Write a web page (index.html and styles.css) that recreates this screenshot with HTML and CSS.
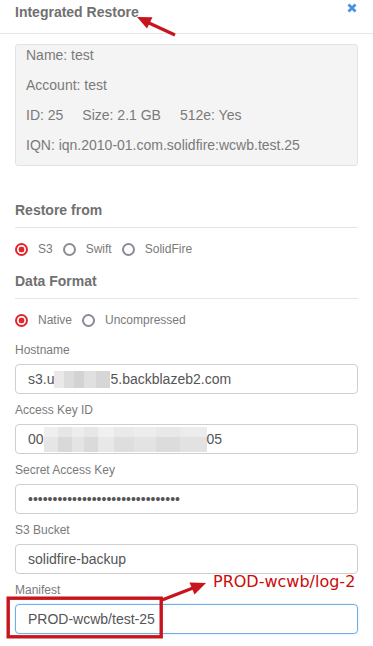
FILE: index.html
```html
<!DOCTYPE html>
<html>
<head>
<meta charset="utf-8">
<link rel="stylesheet" href="styles.css">
</head>
<body>
<div class="page">
  <div class="header">
    <div class="title">Integrated Restore</div>
    <svg class="close" width="10" height="10" viewBox="0 0 10 10"><path d="M1.5 1.5 L8.5 8.5 M8.5 1.5 L1.5 8.5" stroke="#4a8fe3" stroke-width="2.8" stroke-linecap="butt"/></svg>
  </div>
  <div class="content">
    <div class="well">
      <p>Name: test</p>
      <p>Account: test</p>
      <p><span class="stat">ID: 25</span><span class="stat">Size: 2.1 GB</span><span>512e: Yes</span></p>
      <p>IQN: iqn.2010-01.com.solidfire:wcwb.test.25</p>
    </div>

    <div class="section-title">Restore from</div>
    <div class="rule"></div>
    <div class="radios">
      <span class="radio checked"></span><span class="opt">S3</span>
      <span class="radio"></span><span class="opt">Swift</span>
      <span class="radio"></span><span class="opt">SolidFire</span>
    </div>

    <div class="section-title tight">Data Format</div>
    <div class="rule"></div>
    <div class="radios">
      <span class="radio checked"></span><span class="opt">Native</span>
      <span class="radio"></span><span class="opt">Uncompressed</span>
    </div>

    <div class="fields">
      <div class="group">
        <div class="label">Hostname</div>
        <div class="input">s3.u<span class="blur blur-host"></span>5.backblazeb2.com</div>
      </div>
      <div class="group">
        <div class="label">Access Key ID</div>
        <div class="input">00<span class="blur blur-key"></span>05</div>
      </div>
      <div class="group">
        <div class="label">Secret Access Key</div>
        <div class="input dots">•••••••••••••••••••••••••••••••</div>
      </div>
      <div class="group">
        <div class="label">S3 Bucket</div>
        <div class="input">solidfire-backup</div>
      </div>
      <div class="group">
        <div class="label">Manifest</div>
        <div class="input focus">PROD-wcwb/test-25</div>
      </div>
    </div>
  </div>

  <svg class="annot" width="373" height="646" viewBox="0 0 373 646">
    <line x1="175" y1="35" x2="149" y2="23" stroke="#c8141c" stroke-width="3.2"/>
    <polygon points="137,17 152.5,17.3 147,28.6" fill="#c8141c"/>
    <rect x="8.2" y="598.2" width="153" height="38.6" fill="none" stroke="#c8141c" stroke-width="3.4"/>
    <line x1="162" y1="600" x2="193" y2="588" stroke="#c8141c" stroke-width="3.2"/>
    <polygon points="206,583 194.5,594.5 189.5,582.5" fill="#c8141c"/>
  </svg>
  <div class="note">PROD-wcwb/log-2</div>
</div>
</body>
</html>
```

FILE: styles.css
```css
html, body {
  margin: 0;
  padding: 0;
  background: #fff;
}

.page {
  position: relative;
  width: 373px;
  height: 646px;
  overflow: hidden;
  font-family: "Liberation Sans", Arial, sans-serif;
  color: #777;
}

.header {
  display: flex;
  justify-content: space-between;
  align-items: flex-start;
  height: 34px;
  box-sizing: border-box;
  padding: 2px 16px 0 15px;
  border-bottom: 1px solid #e5e5e5;
}

.title {
  font-size: 14px;
  font-weight: bold;
  line-height: 20px;
  color: #707070;
}

.close {
  display: block;
  margin-top: 1px;
}

.content {
  padding: 0 15px;
}

.well {
  margin-top: 10px;
  background: #f4f4f4;
  border: 1px solid #e3e3e3;
  border-radius: 3px;
  padding: 0 10px 10px;
}

.well p {
  margin: 0 0 10px;
  font-size: 14px;
  line-height: 20px;
  color: #7a7a7a;
}

.well p:last-child {
  margin-bottom: 0;
}

.stat {
  margin-right: 19px;
}

.section-title {
  margin-top: 34px;
  font-size: 14px;
  font-weight: bold;
  line-height: 20px;
  color: #707070;
}

.section-title.tight {
  margin-top: 12px;
}

.rule {
  margin-top: 7px;
  border-top: 1px solid #e5e5e5;
}

.radios {
  display: flex;
  align-items: center;
  height: 20px;
  margin-top: 11px;
  font-size: 12px;
  color: #7a7a7a;
}

.radio {
  display: inline-block;
  flex: none;
  width: 13px;
  height: 13px;
  box-sizing: border-box;
  border: 2px solid #8b8b95;
  border-radius: 50%;
  margin: 0 10px 0 0;
}

.radio.checked {
  border-color: #e2262c;
  background: radial-gradient(circle, #e2262c 0 2.7px, transparent 3.2px);
}

.opt {
  margin-right: 10px;
}

.fields {
  margin-top: 12px;
}

.group {
  margin-bottom: 8px;
}

.label {
  font-size: 12px;
  line-height: 16px;
  margin-bottom: 6px;
  color: #7a7a7a;
}

.input {
  display: flex;
  align-items: center;
  height: 30px;
  box-sizing: border-box;
  border: 1px solid #cfcfcf;
  border-radius: 4px;
  padding: 0 12px;
  font-size: 14px;
  color: #555;
  white-space: nowrap;
}

.input.focus {
  border-color: #6fb0e8;
  box-shadow: 0 0 2px rgba(102, 175, 233, 0.4);
}

.dots {
  font-size: 14px;
  letter-spacing: 0;
  color: #555;
}

.blur {
  display: inline-block;
  flex: none;
}

.blur-host {
  width: 56px;
  height: 17px;
  background: linear-gradient(90deg, #e9e9e9 0 10px, #dcdcdc 10px 20px, #d3d3d3 20px 30px, #e0e0e0 30px 42px, #d6d6d6 42px 56px);
}

.blur-key {
  width: 163px;
  height: 25px;
  background:
    linear-gradient(180deg, rgba(255,255,255,0.35) 0 40%, transparent 40% 100%),
    linear-gradient(90deg, #e6e6e6 0 14px, #d9d9d9 14px 28px, #e4e4e4 28px 40px, #dadada 40px 54px, #e8e8e8 54px 70px, #dedede 70px 90px, #e3e3e3 90px 112px, #dcdcdc 112px 136px, #e2e2e2 136px 163px);
}

.annot {
  position: absolute;
  top: 0;
  left: 0;
  pointer-events: none;
}

.note {
  position: absolute;
  left: 213px;
  top: 572px;
  font-family: "DejaVu Sans", sans-serif;
  font-size: 16px;
  line-height: 19px;
  color: #cc0a0a;
  white-space: nowrap;
}
```
